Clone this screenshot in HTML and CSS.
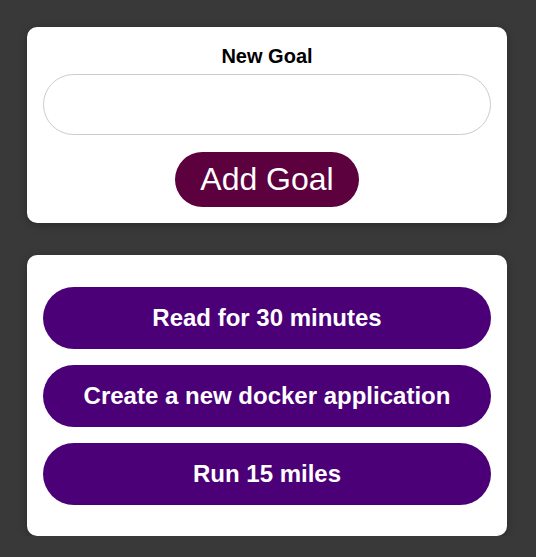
FILE: index.html
```html
<!DOCTYPE html>
<html>
<head>
<meta charset="utf-8">
<link rel="stylesheet" href="styles.css">
</head>
<body>
<main class="app">
  <section class="card form-card">
    <label class="label" for="goal">New Goal</label>
    <input id="goal" class="goal-input" type="text">
    <button class="add-btn">Add Goal</button>
  </section>
  <section class="card list-card">
    <ul class="goals">
      <li class="goal">Read for 30 minutes</li>
      <li class="goal">Create a new docker application</li>
      <li class="goal">Run 15 miles</li>
    </ul>
  </section>
</main>
</body>
</html>
```
FILE: styles.css
```css
html, body {
  margin: 0;
  padding: 0;
  background: #393939;
  font-family: "Liberation Sans", Arial, sans-serif;
}
.app {
  padding: 27px 29px 0 27px;
  display: flex;
  flex-direction: column;
  gap: 32px;
}
.card {
  background: #fff;
  border-radius: 10px;
  box-shadow: 0 2px 8px rgba(0, 0, 0, 0.26);
  padding: 16px;
}
.form-card {
  display: flex;
  flex-direction: column;
  align-items: center;
  padding-top: 18px;
  padding-bottom: 16px;
}
.label {
  font-weight: bold;
  font-size: 20px;
  line-height: 23px;
  color: #000;
}
.goal-input {
  box-sizing: border-box;
  margin-top: 6px;
  width: 100%;
  height: 61px;
  border: 1px solid #ccc;
  border-radius: 31px;
  font-size: 20px;
  padding: 0 20px;
  outline: none;
}
.add-btn {
  margin-top: 17px;
  background: #5c003e;
  color: #fff;
  border: none;
  border-radius: 28px;
  font-family: "Liberation Sans", Arial, sans-serif;
  font-size: 32px;
  height: 55px;
  padding: 0 25px;
  line-height: 55px;
}
.list-card {
  padding: 32px 16px 31px;
}
.goals {
  list-style: none;
  margin: 0;
  padding: 0;
  display: flex;
  flex-direction: column;
  gap: 16px;
}
.goal {
  background: #4b0077;
  color: #fff;
  font-weight: bold;
  font-size: 24px;
  height: 62px;
  border-radius: 31px;
  display: flex;
  align-items: center;
  justify-content: center;
}
```
